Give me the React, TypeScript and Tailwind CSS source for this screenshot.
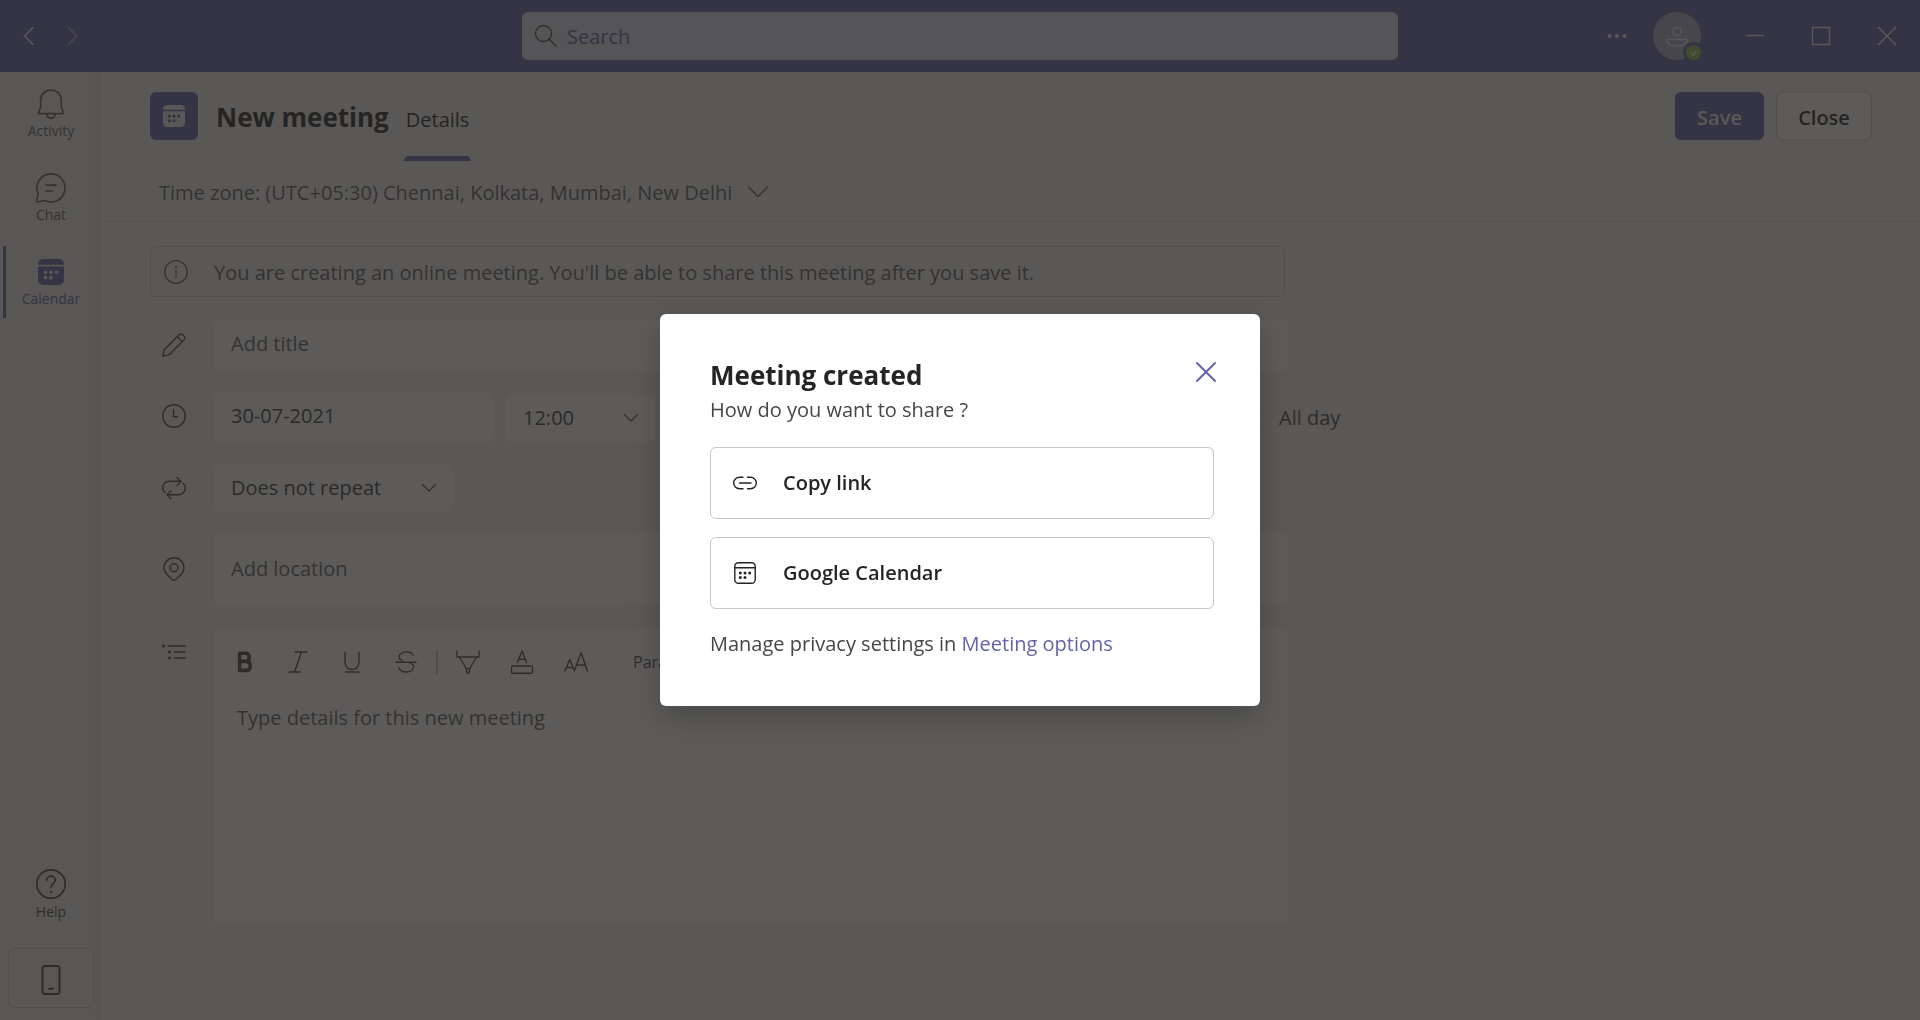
import type { ReactNode } from "react";

type IconProps = { size?: number; sw?: number; className?: string; children: ReactNode };

function Icon({ size = 24, sw = 1.4, className = "", children }: IconProps) {
  return (
    <svg
      width={size}
      height={size}
      viewBox={`0 0 ${size} ${size}`}
      fill="none"
      stroke="currentColor"
      strokeWidth={sw}
      strokeLinecap="round"
      strokeLinejoin="round"
      aria-hidden="true"
      className={`shrink-0 ${className}`}
    >
      {children}
    </svg>
  );
}

const BellIcon = () => (
  <Icon size={32} sw={1.7}>
    <path d="M16 2c-6 0-10.300 4.500-10.300 10v7L3.600 24.700c-.2.6.1 1 .7 1h23.400c.6 0 .9-.5.700-1L26.300 19v-7c0-5.500-4.300-10-10.300-10z" />
    <path d="M11.800 25.900c.3 2.500 2 4.300 4.200 4.300s3.900-1.800 4.200-4.300" />
  </Icon>
);

const ChatIcon = () => (
  <Icon size={32} sw={1.7}>
    <path d="M16 1.900A14.100 14.100 0 1 1 9.600 28.600L2.300 30a.8.8 0 0 1-.9-1L3.200 22A14.100 14.100 0 0 1 16 1.900z" />
    <path d="M11 13.200h10M11 19h6.500" />
  </Icon>
);

function SolidCalendar({ size }: { size: number }) {
  return (
    <svg width={size} height={size} viewBox="0 0 26 26" fill="currentColor" aria-hidden="true" className="shrink-0">
      <path d="M0 5.700V5a5 5 0 0 1 5-5h16a5 5 0 0 1 5 5v.7z" />
      <path
        fillRule="evenodd"
        d="M0 7.400h26V21a5 5 0 0 1-5 5H5a5 5 0 0 1-5-5zM7.500 11.300a1.900 1.900 0 1 0 0 3.800 1.900 1.900 0 0 0 0-3.800zM13 11.300a1.900 1.900 0 1 0 0 3.800 1.900 1.900 0 0 0 0-3.800zM18.500 11.300a1.900 1.900 0 1 0 0 3.800 1.900 1.900 0 0 0 0-3.800zM7.500 16.800a1.900 1.900 0 1 0 0 3.800 1.900 1.900 0 0 0 0-3.800zM13 16.800a1.900 1.900 0 1 0 0 3.800 1.900 1.900 0 0 0 0-3.800z"
      />
    </svg>
  );
}

const HelpIcon = () => (
  <Icon size={32} sw={1.7}>
    <circle cx="16" cy="16" r="14.200" />
    <path d="M11.800 12.500c0-2.500 1.800-4.300 4.200-4.300s4.200 1.700 4.200 4c0 3.300-4.200 3.600-4.200 7.200" />
    <circle cx="16" cy="24" r="1.200" fill="currentColor" stroke="none" />
  </Icon>
);

const PhoneIcon = () => (
  <Icon size={32} sw={2}>
    <rect x="7.500" y="2" width="17" height="28" rx="2.500" />
    <path d="M14 24.700h4" />
  </Icon>
);

const PencilIcon = () => (
  <Icon>
    <path d="M.8 23.200l1.600-6.600L17 2a3.600 3.600 0 0 1 5 5L7.400 21.600zM15.300 3.800l4.900 4.900" />
  </Icon>
);

const ClockIcon = () => (
  <Icon>
    <circle cx="12" cy="12" r="11.300" />
    <path d="M11.500 5.500v7.200h4.200" />
  </Icon>
);

const RepeatIcon = () => (
  <Icon>
    <path d="M15 1.500l4 4-4 4M19 5.300H7.500A6.600 6.600 0 0 0 2.800 16.600M21.200 7.400a6.600 6.600 0 0 1-4.700 11.300H5M9 14.700l-4 4 4 4" />
  </Icon>
);

const PinIcon = () => (
  <Icon>
    <path d="M12 .8a10 10 0 0 1 10 10c0 3-1.500 5-3.500 7.100l-5.100 4.800a2 2 0 0 1-2.800 0l-5.100-4.800C3.500 15.800 2 13.800 2 10.800a10 10 0 0 1 10-10z" />
    <circle cx="12" cy="10.800" r="4" />
  </Icon>
);

const ListIcon = () => (
  <Icon>
    <path d="M6.500 6h17M12.500 12h11M12.500 18h11" />
    <g fill="currentColor" stroke="none">
      <circle cx="1.500" cy="6" r="1.500" />
      <circle cx="7.500" cy="12" r="1.500" />
      <circle cx="7.500" cy="18" r="1.500" />
    </g>
  </Icon>
);

const InfoIcon = () => (
  <Icon sw={1.3}>
    <circle cx="12" cy="12" r="11.300" />
    <path d="M12 10.500v7" />
    <circle cx="12" cy="6.900" r="1" fill="currentColor" stroke="none" />
  </Icon>
);

const ChevronDown = ({ className = "" }: { className?: string }) => (
  <Icon size={16} sw={1.2} className={className}>
    <path d="M1.500 4.500L8 11.200l6.500-6.700" />
  </Icon>
);

const tools: { label: string; icon: ReactNode }[] = [
  {
    label: "Bold",
    icon: (
      <Icon sw={3.6}>
        <path d="M7.600 3.200h5.600c2.600 0 4.100 1.400 4.100 4s-1.500 4.200-4.100 4.200H7.600zM7.600 11.400h6.200c2.700 0 4.400 1.600 4.400 4.500s-1.700 4.500-4.400 4.500H7.600z" />
      </Icon>
    ),
  },
  { label: "Italic", icon: <Icon><path d="M9 2h12M3 22h11M15.500 2L8.500 22" /></Icon> },
  { label: "Underline", icon: <Icon><path d="M5 2v10.500a7 7 0 0 0 14 0V2M5.500 22h13.500" /></Icon> },
  {
    label: "Strikethrough",
    icon: (
      <Icon>
        <path d="M19 5c-1-2-3.700-3.100-6.600-3.100-4 0-7.300 1.900-7.300 4.900 0 1.600 1.200 3 3 3.800M2 12.200h20M14.500 12.400c3.500.7 5 2.300 5 4.600 0 3-3.200 5-7.200 5-3.300 0-6.300-1.400-7.300-4" />
      </Icon>
    ),
  },
];

const insertTools: { label: string; icon: ReactNode }[] = [
  {
    label: "Text highlight color",
    icon: <Icon><path d="M1 1v5.200c0 .5.4.8.8.8h20.400c.4 0 .8-.3.800-.8V1M3.500 7l6.700 11.500h3.600L20.500 7M10.200 18.500v1.200L11 22.500a1 1 0 0 0 2 0l.8-2.800v-1.200" /></Icon>,
  },
  {
    label: "Font color",
    icon: <Icon><path d="M7.300 12.500L12 1l4.700 11.500M9 9.300h6" /><rect x="1.500" y="16" width="21" height="7.300" rx="1.200" /></Icon>,
  },
  {
    label: "Font size",
    icon: <Icon><path d="M.8 21l5-11.500 4.500 11M2.500 17.500h6.200M10.300 21l6.700-18.200L23.500 21M12.600 15h8.800" /></Icon>,
  },
];

const field = "rounded-md bg-white";

function NavItem({ label, icon, active = false }: { label: string; icon: ReactNode; active?: boolean }) {
  return (
    <button
      type="button"
      className={`flex h-[72px] w-full flex-col items-center border-l-3 pr-[3px] text-sm leading-[22px] ${
        active ? "border-[#6264a7] text-[#6264a7]" : "border-transparent text-[#616161]"
      }`}
    >
      <span className="flex h-[42px] items-end justify-center">
        <span className="flex size-8 items-center justify-center">{icon}</span>
      </span>
      <span>{label}</span>
    </button>
  );
}

function FormRow({ icon, children, top = false }: { icon: ReactNode; children: ReactNode; top?: boolean }) {
  return (
    <div className={`flex gap-[27px] pl-3 text-[#484644] ${top ? "items-start" : "items-center"}`}>
      {icon}
      {children}
    </div>
  );
}

function TitleBar() {
  return (
    <header className="grid h-[72px] grid-cols-[1fr_minmax(0,876px)_1fr] items-center bg-[#6264a7] text-[#f3f2f1]">
      <div className="flex items-center gap-5 pl-[17px]">
        <button type="button" aria-label="Back">
          <Icon><path d="M16 3.500L7.500 12l8.500 8.500" /></Icon>
        </button>
        <button type="button" aria-label="Forward" className="opacity-50">
          <Icon><path d="M7.500 3.500L16 12l-8.500 8.500" /></Icon>
        </button>
      </div>
      <label className="flex h-12 items-center gap-[9px] rounded-md bg-[#e2e2ed] px-3 text-[#484644]">
        <Icon sw={1.3}>
          <circle cx="9.500" cy="9.500" r="8" />
          <path d="M15.500 15.500l7 7" />
        </Icon>
        <input
          aria-label="Search"
          placeholder="Search"
          className="w-full bg-transparent pt-[2px] text-xl text-[#6264a7] outline-none placeholder:text-[#6264a7]"
        />
      </label>
      <div className="flex items-center justify-end pr-[21px]">
        <button type="button" aria-label="More options" className="mr-6">
          <Icon>
            <g fill="currentColor" stroke="none">
              <circle cx="4.500" cy="12" r="1.900" />
              <circle cx="12" cy="12" r="1.900" />
              <circle cx="19.500" cy="12" r="1.900" />
            </g>
          </Icon>
        </button>
        <button type="button" aria-label="Profile" className="mr-[42px]">
          <svg width="48" height="48" viewBox="0 0 48 48" fill="none" aria-hidden="true">
            <circle cx="24" cy="24" r="24" fill="#a9aac4" />
            <g stroke="#f3f2f1" strokeWidth="1.600">
              <circle cx="24" cy="19.500" r="4" />
              <path d="M14 27.500h20v1c0 3-4.500 5.500-10 5.500s-10-2.500-10-5.500z" strokeLinejoin="round" />
            </g>
            <circle cx="40.500" cy="40.500" r="10.500" fill="#6264a7" />
            <circle cx="40.500" cy="40.500" r="7.500" fill="#92c353" />
            <path d="M37.700 40.800l2 2 3.600-3.800" stroke="#f3f2f1" strokeWidth="1.500" />
          </svg>
        </button>
        <div className="flex items-center gap-[42px]">
          <button type="button" aria-label="Minimize">
            <Icon><path d="M3 11.500h18" strokeLinecap="butt" /></Icon>
          </button>
          <button type="button" aria-label="Maximize">
            <Icon><path d="M3.500 3.500h17v17h-17z" strokeLinejoin="miter" /></Icon>
          </button>
          <button type="button" aria-label="Close window">
            <Icon><path d="M3.500 3.500l17 17M20.500 3.500l-17 17" /></Icon>
          </button>
        </div>
      </div>
    </header>
  );
}

function Sidebar() {
  return (
    <nav className="flex w-[102px] shrink-0 flex-col justify-between bg-[#f0efed] bg-linear-to-r from-transparent from-88% to-black/5 pb-3">
      <div className="flex flex-col gap-3 px-[3px] pt-[6px]">
        <NavItem label="Activity" icon={<BellIcon />} />
        <NavItem label="Chat" icon={<ChatIcon />} />
        <NavItem label="Calendar" icon={<SolidCalendar size={26} />} active />
      </div>
      <div className="flex flex-col items-center px-2">
        <button type="button" className="flex flex-col items-center text-sm leading-5 text-[#484644]">
          <HelpIcon />
          <span className="mt-[2px]">Help</span>
        </button>
        <button
          type="button"
          aria-label="Download mobile app"
          className="mt-[26px] flex h-[60px] w-full items-center justify-center rounded-md border border-[#cfcdcb] pt-1 text-[#484644]"
        >
          <PhoneIcon />
        </button>
      </div>
    </nav>
  );
}

function MeetingForm() {
  return (
    <form className="flex max-w-[1186px] flex-col pt-6 pl-12 text-xl text-[#605e5c]" onSubmit={(e) => e.preventDefault()}>
      <div className="mr-[3px] flex h-[51px] items-center gap-[26px] rounded-md border border-[#cdcbc9] pl-[13px]">
        <InfoIcon />
        <p className="pt-[2px]">You are creating an online meeting. You'll be able to share this meeting after you save it.</p>
      </div>

      <div className="mt-[23px]">
        <FormRow icon={<span className="pb-[2px]"><PencilIcon /></span>}>
          <input aria-label="Title" placeholder="Add title" className={`${field} h-[51px] min-w-0 grow px-[18px] pb-1 placeholder:text-[#605e5c]`} />
        </FormRow>
      </div>

      <div className="mt-[21px]">
        <FormRow icon={<span className="pb-1"><ClockIcon /></span>}>
          <div className="flex items-center">
            <input aria-label="Start date" defaultValue="30-07-2021" className={`${field} mr-3 h-[51px] w-[280px] px-[18px] pb-1 text-[#3b3a39]`} />
            <div className="relative">
              <select aria-label="Start time" className={`${field} h-12 w-[150px] appearance-none px-[18px] text-[#3b3a39]`}>
                <option>12:00</option>
              </select>
              <ChevronDown className="pointer-events-none absolute top-4 right-4" />
            </div>
            <label className="ml-[562px] flex items-center gap-[14px] whitespace-nowrap text-[#484644]">
              <input type="checkbox" className="h-6 w-12 appearance-none rounded-full border border-[#e6e4e2] bg-[#f7f6f5]" />
              All day
            </label>
          </div>
        </FormRow>
      </div>

      <div className="mt-[21px]">
        <FormRow icon={<RepeatIcon />}>
          <div className="relative">
            <select aria-label="Repeat" className={`${field} h-12 w-[240px] appearance-none px-[18px] text-[#3b3a39]`}>
              <option>Does not repeat</option>
            </select>
            <ChevronDown className="pointer-events-none absolute top-4 right-4" />
          </div>
        </FormRow>
      </div>

      <div className="mt-[21px]">
        <FormRow icon={<PinIcon />}>
          <input aria-label="Location" placeholder="Add location" className={`${field} h-[72px] min-w-0 grow px-[18px] pb-[2px] placeholder:text-[#605e5c]`} />
        </FormRow>
      </div>

      <div className="mt-6">
        <FormRow top icon={<div className="pt-[11px]"><ListIcon /></div>}>
          <div className="flex h-[295px] min-w-0 grow flex-col rounded-md bg-white">
            <div role="toolbar" aria-label="Formatting" className="flex items-center gap-[30px] pt-[21px] pl-[19px]">
              {tools.map((t) => (
                <button key={t.label} type="button" aria-label={t.label}>{t.icon}</button>
              ))}
              <div className="-mx-3 h-6 w-[2px] bg-[#c8c6c4]" />
              {insertTools.map((t) => (
                <button key={t.label} type="button" aria-label={t.label}>{t.icon}</button>
              ))}
              <select aria-label="Text style" className="ml-[15px] h-6 appearance-none text-base leading-6">
                <option>Paragraph</option>
              </select>
            </div>
            <textarea
              aria-label="Details"
              placeholder="Type details for this new meeting"
              className="mt-[30px] grow resize-none px-6 placeholder:text-[#605e5c]"
            />
          </div>
        </FormRow>
      </div>
    </form>
  );
}

function ShareDialog() {
  const option =
    "flex h-[72px] items-center gap-[26px] rounded-md border border-[#c8c6c4] pl-[22px] text-xl font-semibold text-[#252423]";
  return (
    <div className="fixed inset-0 flex items-center justify-center bg-[#252423]/75">
      <section
        role="dialog"
        aria-modal="true"
        aria-labelledby="share-title"
        className="relative flex w-[600px] flex-col rounded-md bg-white pt-[43px] pr-[46px] pb-12 pl-[50px] text-xl leading-7 text-[#484644] shadow-[0_12px_30px_rgba(0,0,0,0.2)]"
      >
        <h2 id="share-title" className="text-[26px] leading-9 font-bold text-[#252423]">Meeting created</h2>
        <button type="button" aria-label="Close dialog" className="absolute top-[46px] right-[42px] text-[#6264a7]">
          <Icon sw={2}><path d="M3 3l18 18M21 3L3 21" /></Icon>
        </button>
        <p className="mt-[3px]">How do you want to share ?</p>
        <div className="mt-[23px] flex flex-col gap-[18px]">
          <button type="button" className={option}>
            <Icon>
              <path d="M10 6.300H6.400a5.700 5.700 0 0 0 0 11.400H10M14.500 6.300h3.100a5.700 5.700 0 0 1 0 11.400h-3.100M6.500 12h11.500" />
            </Icon>
            Copy link
          </button>
          <button type="button" className={option}>
            <Icon>
              <rect x="1.800" y="1.800" width="20.400" height="20.400" rx="3.500" />
              <path d="M1.800 6.800h20.400" />
              <g fill="currentColor" stroke="none">
                <circle cx="7.300" cy="12" r="1.500" />
                <circle cx="12" cy="12" r="1.500" />
                <circle cx="16.700" cy="12" r="1.500" />
                <circle cx="7.300" cy="16.600" r="1.500" />
                <circle cx="12" cy="16.600" r="1.500" />
              </g>
            </Icon>
            Google Calendar
          </button>
        </div>
        <p className="mt-[21px]">
          Manage privacy settings in <a href="#options" className="text-[#6264a7]">Meeting options</a>
        </p>
      </section>
    </div>
  );
}

export default function App() {
  return (
    <div className="flex min-h-screen flex-col bg-[#f3f2f1] font-['Open_Sans',sans-serif]">
      <TitleBar />
      <div className="flex grow">
        <Sidebar />
        <main className="min-w-0 grow">
          <div className="flex h-[90px] items-stretch border-b border-[#edebe9] pr-12 pl-12">
            <div className="mt-5 flex size-12 items-center justify-center rounded-md bg-[#6264a7] text-[#f3f2f1]">
              <SolidCalendar size={22} />
            </div>
            <h1 className="mt-[27px] ml-[18px] text-[26px] leading-9 font-bold text-[#252423]">New meeting</h1>
            <a href="#details" className="ml-[15px] flex flex-col justify-between px-[2px] pt-8 text-xl leading-8 text-[#252423]">
              Details
              <span className="-mx-[2px] h-[5px] rounded-t-md bg-[#6264a7]" />
            </a>
            <div className="mt-5 ml-auto flex h-12 gap-3 text-xl font-semibold">
              <button type="button" className="w-[89px] rounded-md bg-[#6264a7] pt-[3px] text-[#f3f2f1]">Save</button>
              <button type="button" className="w-24 rounded-md border border-[#d8d6d4] bg-white pt-[3px] text-[#252423]">Close</button>
            </div>
          </div>
          <div className="flex h-[60px] items-center border-b border-[#dddbd9] pl-[57px] text-xl text-[#605e5c]">
            <button type="button" className="flex items-center gap-[14px]">
              <span className="pt-[2px]">Time zone: (UTC+05:30) Chennai, Kolkata, Mumbai, New Delhi</span>
              <Icon sw={1.3}><path d="M2.500 7L12 16.500 21.500 7" /></Icon>
            </button>
          </div>
          <MeetingForm />
        </main>
      </div>
      <ShareDialog />
    </div>
  );
}
